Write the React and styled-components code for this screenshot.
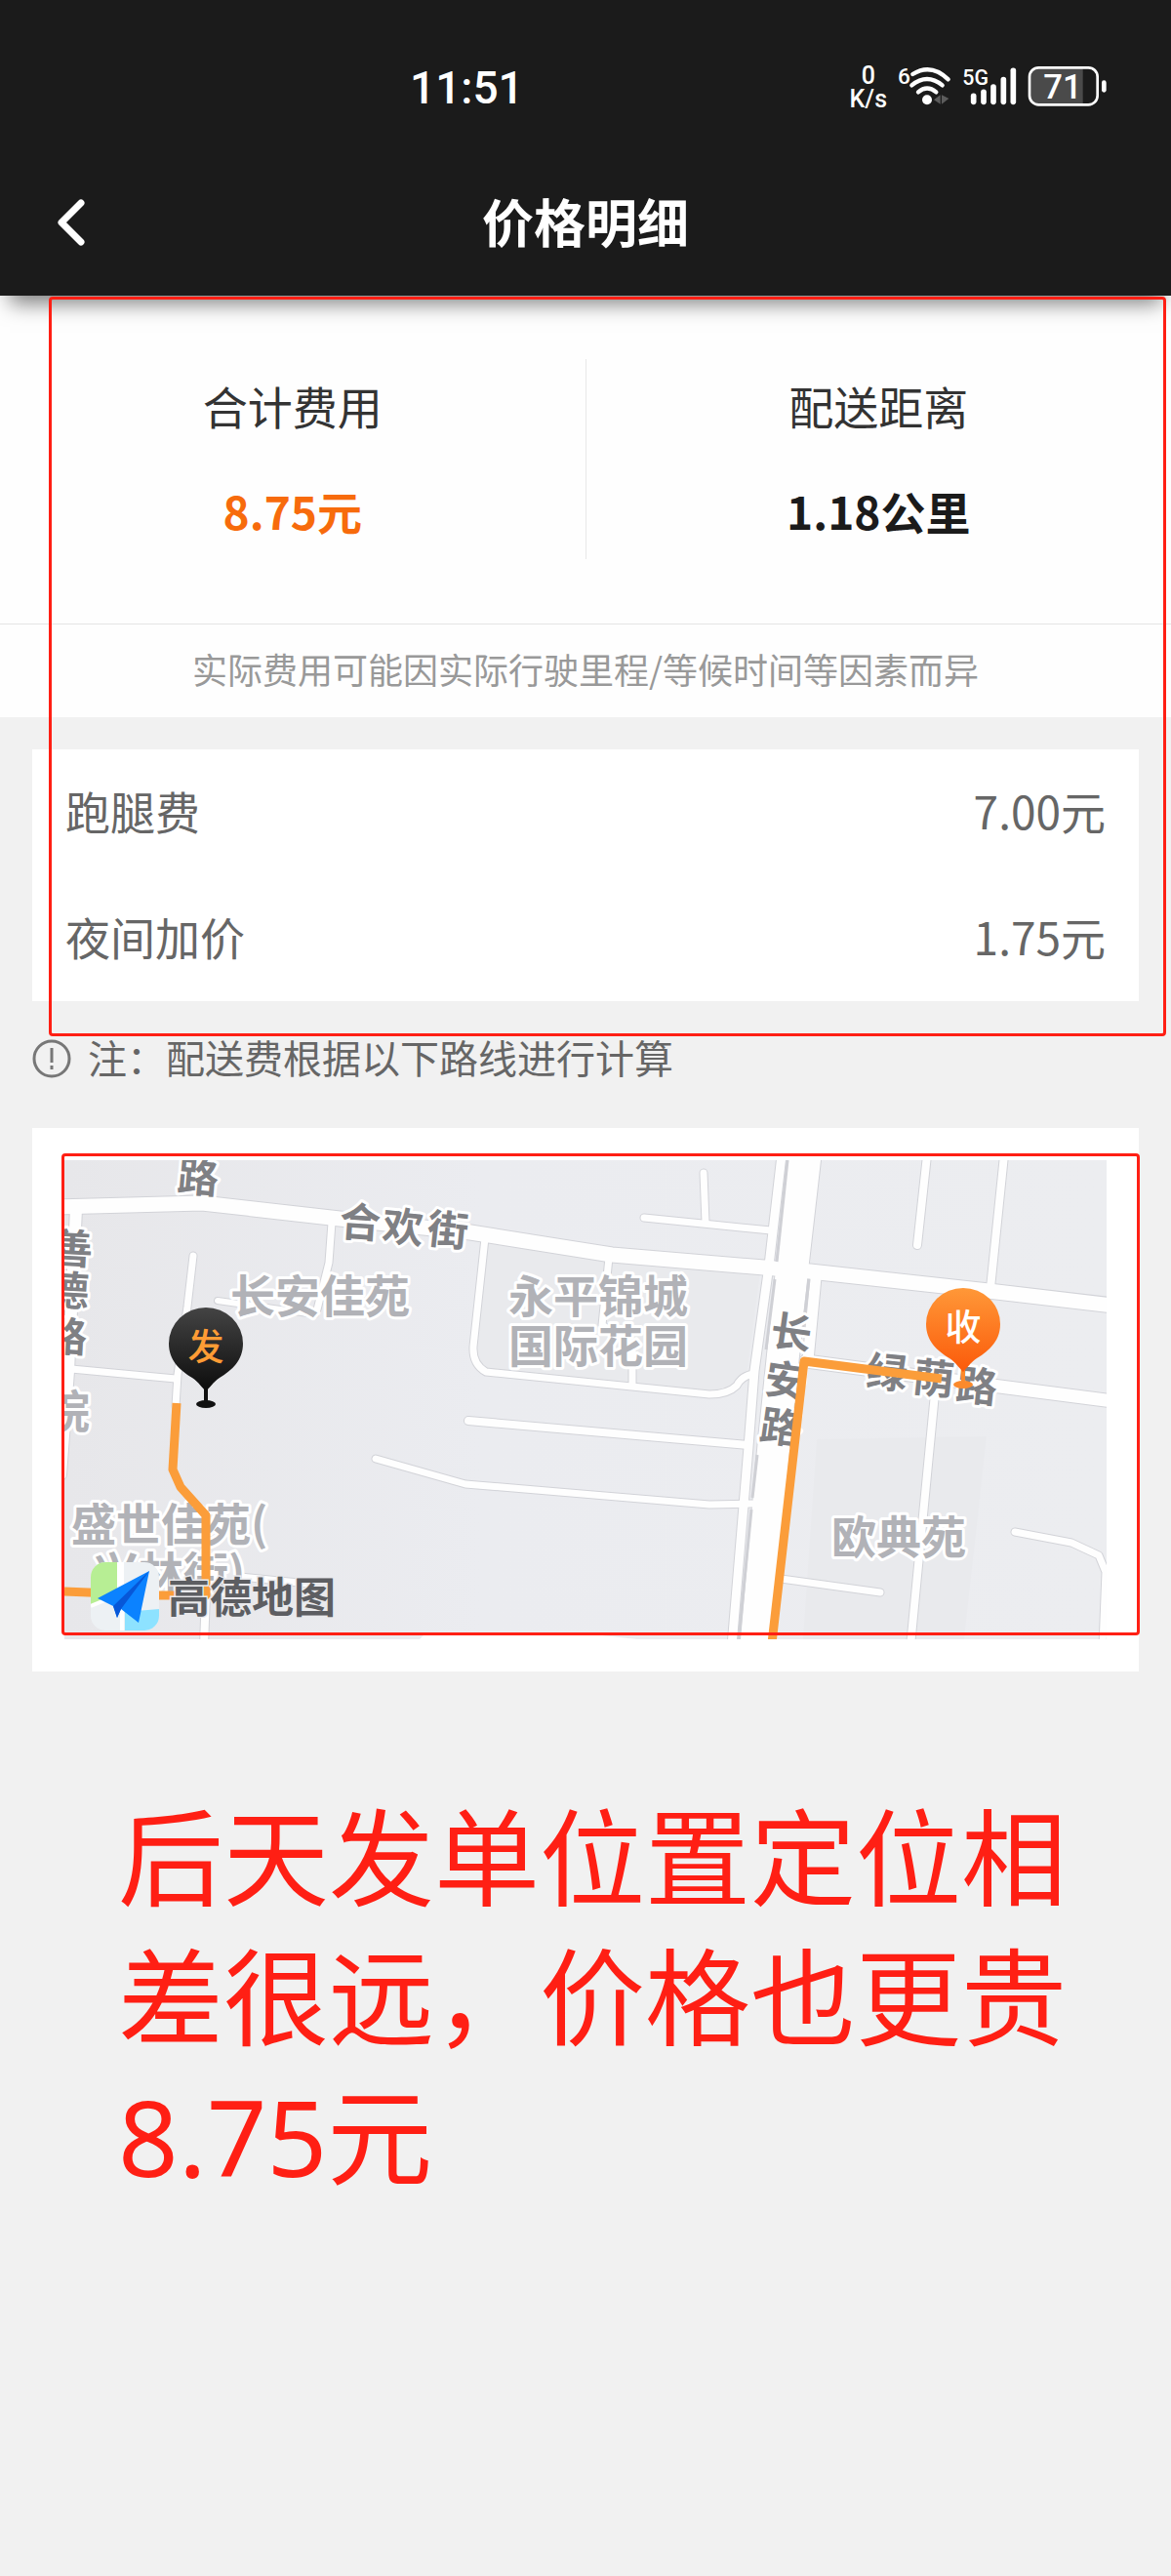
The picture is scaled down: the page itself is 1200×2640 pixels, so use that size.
import React from "react";
import styled, { createGlobalStyle } from "styled-components";

const fees = [
    { name: "跑腿费", amount: "7.00元" },
    { name: "夜间加价", amount: "1.75元" },
];

// roads of the route map, drawn first as casings and then as fills
const roads = [
    { d: "M-5 48 L141 44 L282 60 L416 74 L561 97 L717 110 L764 114 L947 134 L1075 149", w: 15 },
    { d: "M759 -5 L746 108 L727 292 L709 498", w: 33 },
    { d: "M735 -5 L722 108 L707 216 L701 294 L684 498", w: 9 },
    { d: "M770 120 L762 205", w: 11 },
    { d: "M12 50 L4 216 L-4 322", w: 12 },
    { d: "M132 98 L126 150 L116 220 L114 252", w: 7 },
    { d: "M7 214 L114 224", w: 7 },
    { d: "M274 64 L271 105 L259 153", w: 7 },
    { d: "M157 144 L257 158", w: 6 },
    { d: "M319 306 L411 332 L661 353 L704 352", w: 7 },
    { d: "M145 444 L143 498", w: 8 },
    { d: "M181 427 L250 434", w: 7 },
    { d: "M431 80 L419 191 Q418 209 432 217 L661 240 Q680 240 689 231 Q694 221 706 219", w: 7 },
    { d: "M558 100 L551 169 L582 189 L582 229", w: 7 },
    { d: "M414 267 L700 292", w: 8 },
    { d: "M594 59 L654 65 L724 72", w: 7 },
    { d: "M655 13 L657 64", w: 7 },
    { d: "M884 -5 L874 87", w: 8 },
    { d: "M963 -5 L949 131", w: 8 },
    { d: "M760 206 L897 224 L1075 247", w: 13 },
    { d: "M893 229 L867 498", w: 8 },
    { d: "M974 381 L1032 392 L1060 405 L1067 422 L1064 498", w: 7 },
    { d: "M727 428 L836 443", w: 7 },
];

const areas = [
    { text: "长安佳苑", x: 170, y: 156 },
    { text: "永平锦城", x: 455, y: 156 },
    { text: "国际花园", x: 455, y: 207 },
    { text: "欧典苑", x: 786, y: 403 },
    { text: "盛世佳苑(", x: 7, y: 390 },
    { text: "兴林街)", x: 30, y: 440 },
    { text: "院", x: -20, y: 274 },
];

const streets = [
    { text: "路", x: 137, y: 17, r: 5 },
    { text: "合", x: 303, y: 63, r: 4 },
    { text: "欢", x: 347, y: 68, r: 5 },
    { text: "街", x: 393, y: 71, r: 6 },
    { text: "善", x: 8, y: 90, r: 3 },
    { text: "德", x: 4, y: 133, r: 3 },
    { text: "路", x: 2, y: 180, r: 3 },
    { text: "长", x: 745, y: 176, r: 8 },
    { text: "安", x: 739, y: 225, r: 8 },
    { text: "路", x: 734, y: 273, r: 8 },
    { text: "绿", x: 843, y: 217, r: 6 },
    { text: "荫", x: 891, y: 223, r: 6 },
    { text: "路", x: 935, y: 231, r: 6 },
];

function StatusIcons() {
    return (
        <Indicators>
            <Speed>
                <span>0</span>
                <span>K/s</span>
            </Speed>
            <IndicatorIcon width="57" height="45" viewBox="240 50 171 135" aria-label="Wi-Fi">
                <IndicatorText x="243" y="107" fontSize="68">6</IndicatorText>
                <g fill="none" stroke="#fff" strokeWidth="13" strokeLinecap="round">
                    <path d="M289 77 Q345 42 398 93" />
                    <path d="M286 111 Q333 73 380 111" />
                    <path d="M306 132 Q333 109 361 132" />
                </g>
                <circle cx="333" cy="156" r="15" fill="#fff" />
                <path d="M374 141 V169 L354 156Z M378 141 V169 L400 152Z" fill="#5c5c5c" />
            </IndicatorIcon>
            <IndicatorIcon width="57" height="45" viewBox="435 50 171 135" aria-label="5G">
                <IndicatorText x="436" y="110" fontSize="64">5G</IndicatorText>
                <g stroke="#fff" strokeWidth="17" strokeLinecap="round">
                    <path d="M470 144 V162" />
                    <path d="M501 132 V162" />
                    <path d="M531 116 V162" />
                    <path d="M562 94 V162" />
                    <path d="M592 66 V162" />
                </g>
            </IndicatorIcon>
            <IndicatorIcon width="82" height="45" viewBox="640 50 246 135" aria-label="电量 71">
                <path d="M672 60 H810 V168 H672 Q648 168 648 142 V86 Q648 60 672 60Z" fill="#4a4a4a" />
                <rect x="646" y="57" width="209" height="114" rx="28" fill="none" stroke="#fff" strokeWidth="8" />
                <rect x="868" y="96" width="14" height="37" rx="7" fill="#fff" />
                <IndicatorText x="748" y="152" fontSize="104" textAnchor="middle">71</IndicatorText>
            </IndicatorIcon>
        </Indicators>
    );
}

function Pin({ x, y, fill, base, color, children }) {
    return (
        <g transform={`translate(${x} ${y})`}>
            <ellipse rx="10" ry="4" fill={base} />
            <path d="M0 -18 V0" stroke={base} strokeWidth="4" />
            <path
                d="M-38 -62 A38 37 0 0 1 38 -62 C38 -45 27 -35 14 -27 C7 -22 4 -17 0 -13 C-4 -17 -7 -22 -14 -27 C-27 -35 -38 -45 -38 -62Z"
                fill={fill}
            />
            <PinText y="-45" fill={color}>{children}</PinText>
        </g>
    );
}

function MapLogo() {
    return (
        <g>
            <clipPath id="tile">
                <rect x="27" y="412" width="70" height="70" rx="15" />
            </clipPath>
            <g clipPath="url(#tile)">
                <rect x="27" y="412" width="70" height="70" fill="#edf1f4" />
                <path d="M27 412 H54 V444 L27 456Z" fill="#b7ee94" />
                <path d="M62 463 L97 460 V482 H62Z" fill="#8de2ff" />
                <path d="M27 457 L56 445 V412 H59 V482" fill="none" stroke="#fff" strokeWidth="4" />
            </g>
            <path d="M34 449 L87 421 L76 474 L58 460 L54 469 L50 457Z" fill="#0b82ff" />
            <path d="M50 457 L87 421 L58 460 L54 469Z" fill="#0757d8" />
            <LogoText x="106" y="464">高德地图</LogoText>
        </g>
    );
}

function RouteMap() {
    return (
        <MapSvg viewBox="0 0 1068 491" role="img" aria-label="配送路线">
            <defs>
                <linearGradient id="ground">
                    <stop offset="0" stopColor="#e7e7ea" />
                    <stop offset="0.4" stopColor="#ebecf0" />
                    <stop offset="1" stopColor="#ecedf0" />
                </linearGradient>
                <linearGradient id="dark" x2="0" y2="1">
                    <stop offset="0" stopColor="#444" />
                    <stop offset="1" stopColor="#0c0c0c" />
                </linearGradient>
                <linearGradient id="bright" x2="0" y2="1">
                    <stop offset="0" stopColor="#ff9838" />
                    <stop offset="1" stopColor="#fb5a0a" />
                </linearGradient>
            </defs>
            <rect width="1068" height="491" fill="url(#ground)" />
            <path d="M771 286 L945 283 L922 491 H757Z" fill="#e9eaed" />
            <path d="M560 102 L713 115 L698 228 L661 240 L432 217 L419 191 L431 83Z" fill="#e9eaed" />
            <path d="M364 491 L369 486 L551 487 L587 491Z" fill="#fff" />
            <g fill="none" stroke="#d2d3d8" strokeLinecap="round" strokeLinejoin="round">
                {roads.map((road) => (
                    <path key={road.d} d={road.d} strokeWidth={road.w + 2} />
                ))}
            </g>
            <g fill="none" stroke="#fefefe" strokeLinecap="round" strokeLinejoin="round">
                {roads.map((road) => (
                    <path key={road.d} d={road.d} strokeWidth={road.w} />
                ))}
            </g>
            {/* kerbs beside 长安路 */}
            <g stroke="#cfd0d5" strokeWidth="3">
                <path d="M741 0 L730 104" />
                <path d="M728 122 L719 194" />
                <path d="M710 302 L705 346" />
                <path d="M704 358 L691 491" />
                <path d="M763 122 L757 172" />
            </g>
            {areas.map((area) => (
                <AreaLabel key={area.text} x={area.x} y={area.y}>{area.text}</AreaLabel>
            ))}
            {streets.map((s) => (
                <StreetLabel key={`${s.x}-${s.y}`} transform={`translate(${s.x} ${s.y}) rotate(${s.r})`} y="16">
                    {s.text}
                </StreetLabel>
            ))}
            <g fill="none" stroke="#fb9d3a" strokeWidth="9" strokeLinejoin="round">
                <path d="M115 249 L111 317 L119 335 L145 364 L145 446 L97 446 L0 442" />
                <path d="M899 224 L758 206 L725 495" />
            </g>
            <Pin x={145} y={250} fill="url(#dark)" base="#111" color="#ff9c35">发</Pin>
            <Pin x={921} y={230} fill="url(#bright)" base="#fb8a2c" color="#fff">收</Pin>
            <MapLogo />
        </MapSvg>
    );
}

function App() {
    return (
        <Page>
            <GlobalStyle />
            <Header>
                <StatusBar>
                    <Clock>11:51</Clock>
                    <StatusIcons />
                </StatusBar>
                <NavBar>
                    <BackButton aria-label="返回">
                        <svg width="32" height="50" viewBox="0 0 32 50" fill="none" stroke="#fff" strokeWidth="7" strokeLinecap="round" strokeLinejoin="round">
                            <path d="M27 5 L7 25 L27 45" />
                        </svg>
                    </BackButton>
                    <Title>价格明细</Title>
                </NavBar>
            </Header>

            <Marked>
                <Summary>
                    <Figure>
                        <Label>合计费用</Label>
                        <Value $accent>8.75元</Value>
                    </Figure>
                    <Figure>
                        <Label>配送距离</Label>
                        <Value>1.18公里</Value>
                    </Figure>
                </Summary>
                <Disclaimer>实际费用可能因实际行驶里程/等候时间等因素而异</Disclaimer>
                <FeeCard>
                    {fees.map((fee) => (
                        <FeeRow key={fee.name}>
                            <dt>{fee.name}</dt>
                            <dd>{fee.amount}</dd>
                        </FeeRow>
                    ))}
                </FeeCard>
                <FeeFrame />
            </Marked>

            <Note>
                <svg width="40" height="40" viewBox="0 0 40 40" fill="none" stroke="#777" strokeWidth="3">
                    <circle cx="20" cy="20" r="18" />
                    <path d="M20 9 V24" />
                    <path d="M20 27 V31" />
                </svg>
                <NoteText>注：配送费根据以下路线进行计算</NoteText>
            </Note>

            <MapCard>
                <RouteMap />
                <MapFrame />
            </MapCard>

            <Remark>后天发单位置定位相差很远，价格也更贵8.75元</Remark>
        </Page>
    );
}

const GlobalStyle = createGlobalStyle`
      * {
        box-sizing: border-box;
      }

      body {
        margin: 0;
        background: #f1f1f1;
        font-family: "Noto Sans CJK SC", sans-serif;
      }

      h1, p, dl, dt, dd {
        margin: 0;
      }
    `;

const Page = styled.main`
      min-height: 100vh;
      background: #f1f1f1;
    `;

const Header = styled.header`
      position: relative;
      z-index: 1;
      background: #1b1b1b;
      color: #fff;
      box-shadow: 0 18px 20px -10px rgba(0, 0, 0, 0.5);
    `;

const StatusBar = styled.div`
      display: flex;
      align-items: center;
      justify-content: space-between;
      height: 153px;
      padding: 26px 65px 0 35%;
      font-family: Roboto, sans-serif;
    `;

const Clock = styled.time`
      font-size: 46px;
      font-weight: 500;
    `;

const Indicators = styled.div`
      display: flex;
      align-items: center;
      gap: 10px;
    `;

const Speed = styled.div`
      display: flex;
      flex-direction: column;
      align-items: center;
      font-size: 25px;
      font-weight: 500;
      line-height: 24px;
    `;

const IndicatorIcon = styled.svg`
      overflow: visible;
    `;

const IndicatorText = styled.text`
      fill: #fff;
      font-family: Roboto, sans-serif;
      font-weight: 500;
    `;

const NavBar = styled.div`
      display: grid;
      grid-template-columns: 1fr auto 1fr;
      align-items: center;
      height: 150px;
      padding: 0 56px;
    `;

const BackButton = styled.button`
      display: flex;
      justify-self: start;
      padding: 0;
      border: 0;
      background: none;
      cursor: pointer;
    `;

const Title = styled.h1`
      padding-bottom: 4px;
      font-size: 53px;
      font-weight: 700;
      line-height: 70px;
    `;

const Marked = styled.section`
      position: relative;
    `;

const Frame = styled.div`
      position: absolute;
      z-index: 2;
      border: 3px solid #ff1f14;
      border-radius: 4px;
      pointer-events: none;
    `;

const FeeFrame = styled(Frame)`
      inset: 1px 5px -36px 50px;
    `;

const Summary = styled.div`
      display: flex;
      padding: 65px 0 66px;
      border-bottom: 1px solid #e4e4e4;
      background: #fefefe;
    `;

const Figure = styled.div`
      display: flex;
      flex: 1;
      flex-direction: column;
      align-items: center;
      justify-content: center;
      gap: 38px;
      height: 205px;
      padding-bottom: 4px;

      & + & {
        border-left: 1px solid #e8e8e8;
      }
    `;

const Label = styled.p`
      color: #333;
      font-size: 46px;
      line-height: 70px;
    `;

const Value = styled.p`
      color: ${({ $accent }) => ($accent ? "#f76b0c" : "#1b1b1b")};
      font-size: 46px;
      font-weight: 700;
      line-height: 70px;
    `;

const Disclaimer = styled.p`
      padding-bottom: 4px;
      background: #fefefe;
      color: #999;
      font-size: 36px;
      line-height: 91px;
      text-align: center;
    `;

const FeeCard = styled.dl`
      margin: 33px 33px 0;
      padding: 0 34px;
      background: #fff;
    `;

const FeeRow = styled.div`
      display: flex;
      justify-content: space-between;
      padding-bottom: 4px;
      color: #666;
      font-size: 46px;
      line-height: 125px;
    `;

const Note = styled.p`
      display: flex;
      align-items: center;
      gap: 17px;
      height: 130px;
      padding: 0 33px 12px;
      color: #666;
      font-size: 40px;
    `;

const NoteText = styled.span`
      padding-bottom: 4px;
    `;

const MapCard = styled.section`
      position: relative;
      margin: 0 33px;
      padding: 33px;
      background: #fff;
    `;

const MapFrame = styled(Frame)`
      inset: 26px -1px 37px 30px;
    `;

const MapSvg = styled.svg`
      display: block;
      width: 100%;
      font-family: "Noto Sans CJK SC", sans-serif;
      font-weight: 700;
    `;

const AreaLabel = styled.text`
      fill: #b1b2b7;
      stroke: #fff;
      stroke-width: 6px;
      stroke-linejoin: round;
      paint-order: stroke;
      font-size: 46px;
    `;

const StreetLabel = styled(AreaLabel)`
      fill: #7f8084;
      font-size: 42px;
      text-anchor: middle;
    `;

const PinText = styled.text`
      font-size: 37px;
      font-weight: 500;
      text-anchor: middle;
    `;

const LogoText = styled.text`
      fill: #5d5e62;
      stroke: #e9e9ec;
      stroke-width: 3px;
      paint-order: stroke;
      font-size: 43px;
    `;

const Remark = styled.p`
      padding: 119px 90px 0 121px;
      color: #ff1f14;
      font-family: "Noto Sans", "Noto Sans CJK SC", sans-serif;
      font-size: 108px;
      line-height: 143px;
    `;

export default App;
